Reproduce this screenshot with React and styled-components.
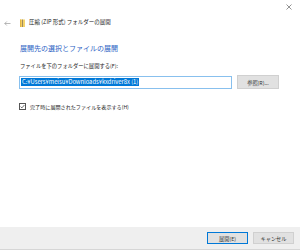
import React from "react";
import styled, { createGlobalStyle } from "styled-components";

const Global = createGlobalStyle`
  html, body { margin: 0; padding: 0; background: #fff; }
  body { font-family: "Noto Sans CJK JP", "Noto Sans", sans-serif; }
`;

const Window = styled.div`
  width: 300px;
  height: 250px;
  display: flex;
  flex-direction: column;
  background: #fff;
  overflow: hidden;
`;

const TitleBar = styled.div`
  height: 14px;
  display: flex;
  justify-content: flex-end;
  align-items: center;
  padding-right: 8px;
`;

const CloseBtn = styled.span`
  width: 6px;
  height: 6px;
  display: flex;
  margin-top: -1px;
`;

const NavRow = styled.div`
  height: 18px;
  display: flex;
  align-items: center;
  padding-left: 4px;
`;

const Back = styled.span`
  width: 7px;
  display: flex;
  margin-right: 9px;
`;

const Folder = styled.span`
  display: flex;
  margin-right: 4px;
`;

const Title = styled.span`
  font-size: 5.5px;
  color: #222;
  white-space: nowrap;
  line-height: 1;
`;

const Content = styled.div`
  padding: 0 21px 0 20px;
  display: flex;
  flex-direction: column;
`;

const Heading = styled.div`
  font-size: 7px;
  color: #2c62c4;
  line-height: 1;
  margin-top: 13px;
  white-space: nowrap;
`;

const Label = styled.div`
  font-size: 5.3px;
  color: #222;
  line-height: 1;
  margin-top: 12px;
  white-space: nowrap;
`;

const InputRow = styled.div`
  display: flex;
  align-items: center;
  margin-top: 6px;
  margin-left: -1px;
  gap: 5px;
`;

const Input = styled.div`
  width: 213px;
  height: 13px;
  box-sizing: border-box;
  border: 1px solid #88c0ee;
  display: flex;
  align-items: center;
  padding-left: 1px;
`;

const Selected = styled.span`
  background: #0078d7;
  color: #fff;
  font-size: 5.8px;
  line-height: 8px;
  height: 8px;
  padding: 0 1px;
  white-space: nowrap;
`;

const Btn = styled.div`
  width: ${(p) => p.$w || 42}px;
  height: ${(p) => p.$h || 14}px;
  box-sizing: border-box;
  background: #e1e1e1;
  border: 1px solid ${(p) => (p.$primary ? "#0078d7" : "#d0d0d0")};
  display: flex;
  align-items: center;
  justify-content: center;
  font-size: 5.2px;
  color: #333;
  white-space: nowrap;
`;

const CheckRow = styled.div`
  display: flex;
  align-items: center;
  margin-top: 14px;
  margin-left: -1px;
  gap: 4px;
`;

const Box = styled.span`
  width: 7px;
  height: 7px;
  box-sizing: border-box;
  border: 1px solid #555;
  display: flex;
  align-items: center;
  justify-content: center;
  background: #fff;
`;

const CheckText = styled.span`
  font-size: 5.1px;
  color: #222;
  line-height: 1;
  white-space: nowrap;
`;

const Spacer = styled.div`
  flex: 1;
`;

const Footer = styled.div`
  height: 22px;
  background: #efefef;
  border-bottom: 1px solid #d6d6d6;
  display: flex;
  align-items: center;
  justify-content: flex-end;
  padding-right: 6px;
  gap: 5px;
  flex-shrink: 0;
`;

export default function App() {
  return (
    <Window>
      <Global />
      <TitleBar>
        <CloseBtn>
          <svg width="6" height="6" viewBox="0 0 6 6">
            <path d="M0.5 0.5 L5.5 5.5 M5.5 0.5 L0.5 5.5" stroke="#777" strokeWidth="0.8" />
          </svg>
        </CloseBtn>
      </TitleBar>
      <NavRow>
        <Back>
          <svg width="7" height="5" viewBox="0 0 7 5">
            <path d="M6.5 2.5 H0.8 M2.8 0.5 L0.8 2.5 L2.8 4.5" stroke="#999" strokeWidth="0.7" fill="none" />
          </svg>
        </Back>
        <Folder>
          <svg width="5" height="8" viewBox="0 0 5 8">
            <rect x="0" y="0.5" width="5" height="7.5" fill="#f4d36b" />
            <rect x="0" y="0.5" width="1.2" height="7.5" fill="#e3b540" />
            <rect x="2.2" y="0.5" width="0.8" height="7.5" fill="#8a7a5a" />
          </svg>
        </Folder>
        <Title>圧縮 (ZIP 形式) フォルダーの展開</Title>
      </NavRow>
      <Content>
        <Heading>展開先の選択とファイルの展開</Heading>
        <Label>ファイルを下のフォルダーに展開する(F):</Label>
        <InputRow>
          <Input>
            <Selected>C:¥Users¥meisu¥Downloads¥kxdriver8x (1)</Selected>
          </Input>
          <Btn $w={42} $h={14}>参照(R)...</Btn>
        </InputRow>
        <CheckRow>
          <Box>
            <svg width="5" height="5" viewBox="0 0 5 5">
              <path d="M0.6 2.6 L1.9 3.9 L4.4 1" stroke="#333" strokeWidth="0.7" fill="none" />
            </svg>
          </Box>
          <CheckText>完了時に展開されたファイルを表示する(H)</CheckText>
        </CheckRow>
      </Content>
      <Spacer />
      <Footer>
        <Btn $primary $w={41} $h={12}>展開(E)</Btn>
        <Btn $w={41} $h={12}>キャンセル</Btn>
      </Footer>
    </Window>
  );
}
